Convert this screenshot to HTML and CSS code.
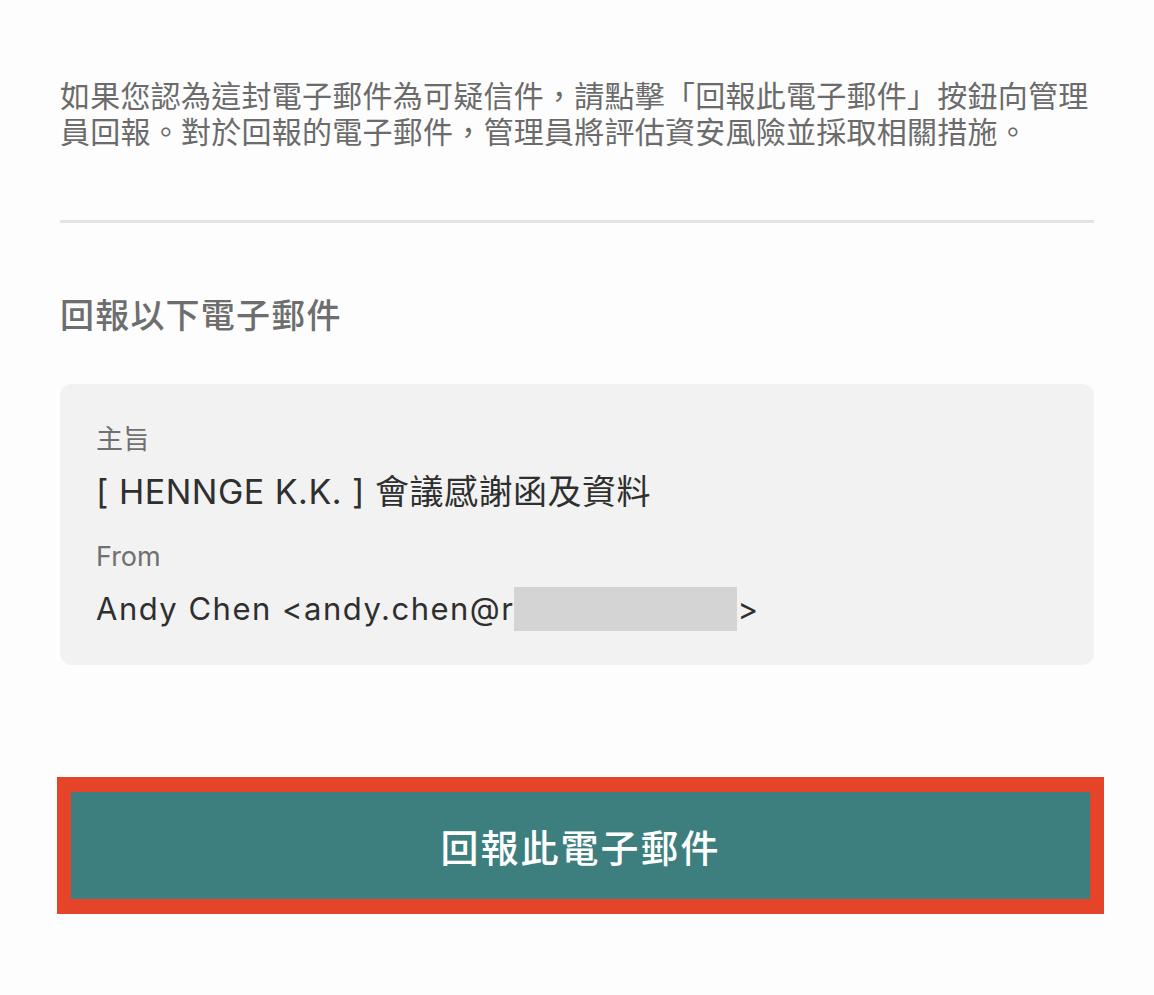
FILE: index.html
```html
<!DOCTYPE html>
<html lang="zh-Hant">
<head>
  <meta charset="UTF-8">
  <title>回報此電子郵件</title>
  <link rel="stylesheet" href="styles.css">
</head>
<body>

  <div class="page">
    <p class="intro">如果您認為這封電子郵件為可疑信件，請點擊「回報此電子郵件」按鈕向管理員回報。對於回報的電子郵件，管理員將評估資安風險並採取相關措施。</p>

    <div class="divider"></div>

    <h2 class="section-title">回報以下電子郵件</h2>

    <div class="mail-card">
      <div class="label">主旨</div>
      <div class="subject">[ HENNGE K.K. ] 會議感謝函及資料</div>
      <div class="label label-from">From</div>
      <div class="sender">Andy Chen &lt;andy.chen@r<span class="redacted"></span>&gt;</div>
    </div>

    <div class="report-frame">
      <button class="report-btn">回報此電子郵件</button>
    </div>
  </div>

</body>
</html>
```

FILE: styles.css
```css
body {
  margin: 0;
  background: #fdfdfd;
  font-family: Inter, "Noto Sans CJK TC", sans-serif;
}

.page {
  padding: 78px 60px 0;
}

.intro {
  margin: 0;
  font-size: 30px;
  line-height: 36px;
  letter-spacing: 0.25px;
  color: #6b6b6b;
}

.divider {
  margin-top: 70px;
  height: 3px;
  background: #e4e4e4;
}

.section-title {
  margin: 71px 0 0;
  font-size: 34px;
  line-height: 44px;
  font-weight: 500;
  letter-spacing: 1.2px;
  color: #6e6e6e;
}

.mail-card {
  margin-top: 46px;
  padding: 38px 36px 34px;
  background: #f2f2f2;
  border-radius: 12px;
}

.label {
  font-size: 27px;
  line-height: 36px;
  color: #707070;
}

.label-from {
  margin-top: 27px;
}

.subject {
  margin-top: 14px;
  font-size: 34px;
  line-height: 40px;
  letter-spacing: 0.5px;
  color: #2f2f2f;
}

.sender {
  margin-top: 12px;
  font-size: 31px;
  line-height: 44px;
  letter-spacing: 1.5px;
  color: #2f2f2f;
}

.redacted {
  display: inline-block;
  width: 223px;
  height: 44px;
  vertical-align: top;
  background: #d4d4d4;
}

.report-frame {
  margin: 112px -10px 0 -3px;
  border: 14px solid #e5432a;
  border-top-width: 15px;
  border-bottom-width: 15px;
}

.report-btn {
  display: block;
  width: 100%;
  height: 107px;
  border: none;
  background: #3c7f7e;
  color: #fff;
  font-family: "Noto Sans CJK TC", sans-serif;
  font-size: 38px;
  font-weight: 500;
  letter-spacing: 2px;
}
```
